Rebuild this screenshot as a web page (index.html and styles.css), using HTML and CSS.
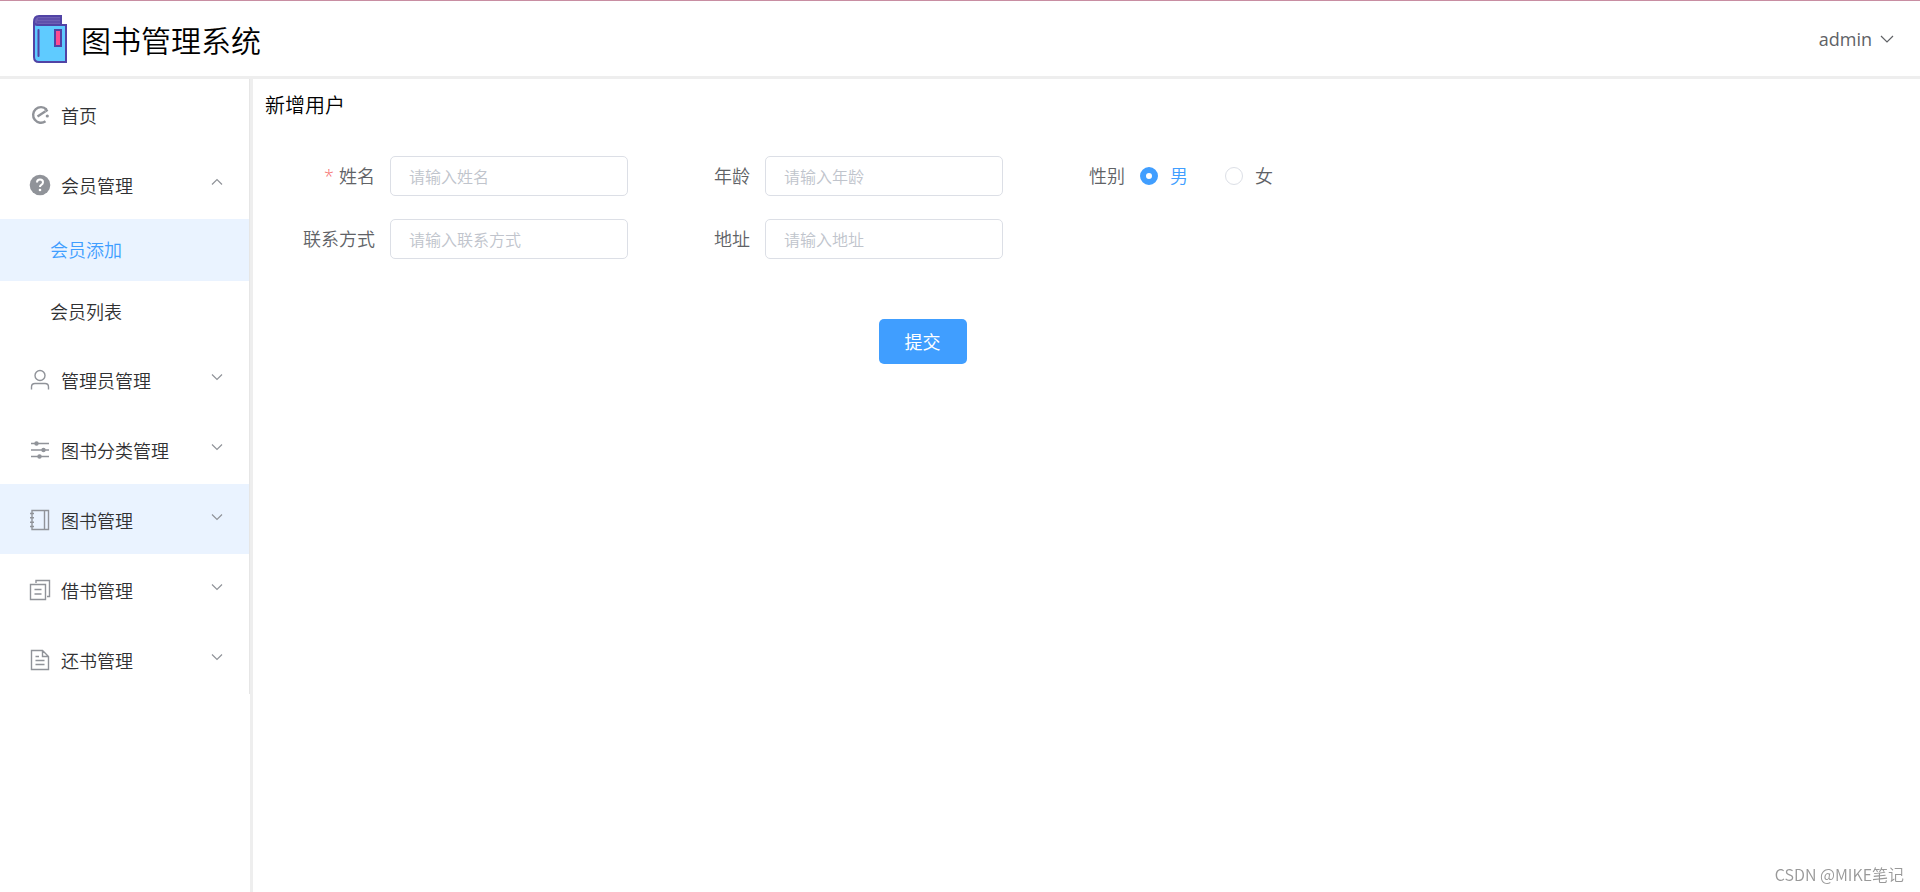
FILE: index.html
```html
<!DOCTYPE html>
<html lang="zh-CN">
<head>
<meta charset="utf-8">
<title>图书管理系统</title>
<link rel="stylesheet" href="styles.css">
</head>
<body>
<header class="header">
  <div class="brand">
    <svg class="logo" viewBox="0 0 34 48" aria-hidden="true">
      <path d="M1 7Q1 1 6 1H28V10H33V47H6Q1 47 1 42Z" fill="#5fcbff"/>
      <path d="M1 8Q1 1 6 1H28V10H1Z" fill="#6e5fb4"/>
      <path d="M5 4H27M4 7H27" stroke="#5142a3" stroke-width="1"/>
      <path d="M1 7Q1 1 6 1H28V10H33V47H6Q1 47 1 42ZM1 8Q2 10 6 10H28" fill="none" stroke="#5143a5" stroke-width="2"/>
      <path d="M5.500 15V41" stroke="#5143a5" stroke-width="2" stroke-linecap="round"/>
      <path d="M22 15H28V31H22Z" fill="#ff4b91" stroke="#5143a5" stroke-width="2"/>
    </svg>
    <h1 class="brand-name">图书管理系统</h1>
  </div>
  <button class="account" type="button">admin
    <svg class="account-arrow" viewBox="0 0 14 8" aria-hidden="true"><path d="M1 1L7 7L13 1"/></svg>
  </button>
</header>
<div class="body">
  <aside class="aside">
    <nav class="menu">
      <a class="item" href="#">
        <svg class="icon" viewBox="0 0 22 22" aria-hidden="true"><path d="M17.500 5.500A7.800 7.800 0 1 0 16.500 17.300" stroke-width="2.400"/><path d="M8.500 12.500L16.500 7.300" stroke-width="2.400"/><path d="M16.300 4.500L18.300 7.500" stroke-width="2.400"/><circle class="solid" cx="18.300" cy="12" r="1.600"/></svg>
        <span>首页</span>
      </a>
      <button class="item" type="button" aria-expanded="true">
        <svg class="icon" viewBox="0 0 22 22" aria-hidden="true"><circle class="solid" cx="11" cy="11" r="10.300"/><path class="mark" d="M8 8.500Q8 5.500 11 5.500Q14 5.500 14 8.200Q14 9.800 12.300 10.800Q11 11.600 11 13"/><circle class="mark-dot" cx="11" cy="16" r="1.300"/></svg>
        <span>会员管理</span>
        <svg class="arrow" viewBox="0 0 12 8" aria-hidden="true"><path d="M1 6.500L6 1.500L11 6.500"/></svg>
      </button>
      <div class="submenu">
        <a class="subitem active" href="#">会员添加</a>
        <a class="subitem" href="#">会员列表</a>
      </div>
      <button class="item" type="button">
        <svg class="icon" viewBox="0 0 22 22" aria-hidden="true"><circle cx="11" cy="6.500" r="5"/><path d="M2.500 20.500V18Q2.500 14.500 6 14.500H16Q19.500 14.500 19.500 18V20.500"/></svg>
        <span>管理员管理</span>
        <svg class="arrow" viewBox="0 0 12 8" aria-hidden="true"><path d="M1 1.500L6 6.500L11 1.500"/></svg>
      </button>
      <button class="item" type="button">
        <svg class="icon" viewBox="0 0 22 22" aria-hidden="true"><path d="M2 4.500H20M2 11H20M2 17.500H20"/><circle class="solid" cx="7.500" cy="4.500" r="2.200"/><circle class="solid" cx="14.500" cy="11" r="2.200"/><circle class="solid" cx="10.500" cy="17.500" r="2.200"/></svg>
        <span>图书分类管理</span>
        <svg class="arrow" viewBox="0 0 12 8" aria-hidden="true"><path d="M1 1.500L6 6.500L11 1.500"/></svg>
      </button>
      <button class="item hovered" type="button">
        <svg class="icon" viewBox="0 0 22 22" aria-hidden="true"><path d="M3 1.500H19.500V20.500H3ZM15.500 1.500V20.500"/><path d="M1 4.500H5M1 8.800H5M1 13.200H5M1 17.500H5"/></svg>
        <span>图书管理</span>
        <svg class="arrow" viewBox="0 0 12 8" aria-hidden="true"><path d="M1 1.500L6 6.500L11 1.500"/></svg>
      </button>
      <button class="item" type="button">
        <svg class="icon" viewBox="0 0 22 22" aria-hidden="true"><path d="M1.500 5.500H16.500V20.500H1.500ZM7 4V1.500H20.500V17.500H18M5.500 10.500H12.500M5.500 15H12.500"/></svg>
        <span>借书管理</span>
        <svg class="arrow" viewBox="0 0 12 8" aria-hidden="true"><path d="M1 1.500L6 6.500L11 1.500"/></svg>
      </button>
      <button class="item" type="button">
        <svg class="icon" viewBox="0 0 22 22" aria-hidden="true"><path d="M2.500 1.500H13.500L19.500 7.500V20.500H2.500ZM13.500 1.500V7.500H19.500M6.500 7.500H10M6.500 11.500H15.500M6.500 15.500H15.500"/></svg>
        <span>还书管理</span>
        <svg class="arrow" viewBox="0 0 12 8" aria-hidden="true"><path d="M1 1.500L6 6.500L11 1.500"/></svg>
      </button>
    </nav>
  </aside>
  <main class="main">
    <h2 class="title">新增用户</h2>
    <form class="form">
      <div class="fields">
        <div class="field">
          <label class="label required" for="name">姓名</label>
          <input class="input" id="name" type="text" placeholder="请输入姓名">
        </div>
        <div class="field">
          <label class="label" for="age">年龄</label>
          <input class="input" id="age" type="text" placeholder="请输入年龄">
        </div>
        <div class="field" role="radiogroup" aria-labelledby="sex">
          <span class="label" id="sex">性别</span>
          <div class="radios">
            <label class="radio"><input class="dot" type="radio" name="sex" checked><span class="radio-text">男</span></label>
            <label class="radio"><input class="dot" type="radio" name="sex"><span class="radio-text">女</span></label>
          </div>
        </div>
        <div class="field">
          <label class="label" for="phone">联系方式</label>
          <input class="input" id="phone" type="text" placeholder="请输入联系方式">
        </div>
        <div class="field">
          <label class="label" for="address">地址</label>
          <input class="input" id="address" type="text" placeholder="请输入地址">
        </div>
      </div>
      <div class="actions"><button class="submit" type="button">提交</button></div>
    </form>
  </main>
</div>
<div class="watermark">CSDN @MIKE笔记</div>
</body>
</html>
```
FILE: styles.css
```css
* { box-sizing: border-box; }

body {
  margin: 0;
  min-height: 100vh;
  display: flex;
  flex-direction: column;
  background: #fff;
  color: #303133;
  font: 350 18px/24px "Noto Sans CJK SC", sans-serif;
}

button {
  border: 0;
  background: none;
  font: inherit;
  color: inherit;
  cursor: pointer;
}

a { color: inherit; text-decoration: none; }

.header {
  display: flex;
  align-items: center;
  justify-content: space-between;
  height: 79px;
  padding: 0 26px 0 33px;
  border-top: 1px solid #c88ea2;
  border-bottom: 3px solid #eee;
}

.brand { display: flex; align-items: center; gap: 14px; }
.logo { width: 34px; height: 48px; }
.brand-name { margin: 0; font-size: 30px; line-height: 40px; font-weight: 350; color: #000; }

.account {
  display: flex;
  align-items: center;
  gap: 8px;
  padding: 0;
  color: #606266;
  font-family: "Open Sans", sans-serif;
  font-weight: 400;
}
.account-arrow { width: 14px; height: 8px; fill: none; stroke: #606266; stroke-width: 1.2; }

.body { flex: 1; display: flex; }
.aside { flex: none; width: 253px; border-right: 3px solid #eee; }
.menu { border-right: 1px solid #e6e6e6; }

.item {
  display: flex;
  align-items: center;
  width: 100%;
  height: 70px;
  padding: 2px 26px 0 29px;
  text-align: left;
}
.hovered { background: #eaf3ff; }

.icon { width: 22px; height: 22px; margin-right: 10px; fill: none; stroke: #909399; stroke-width: 1.4; }
.icon .solid { fill: #909399; stroke: none; }
.icon .mark { stroke: #fff; stroke-width: 2; }
.icon .mark-dot { fill: #fff; stroke: none; }
.arrow { width: 12px; height: 8px; margin: 0 0 6px auto; fill: none; stroke: #909399; stroke-width: 1.2; }

.submenu { display: grid; padding-bottom: 1px; }
.subitem { padding: 18px 0 20px 50px; }
.active { background: #eaf3ff; color: #409eff; }

.main { flex: 1; padding: 12px; }
.title { margin: 0; font-size: 20px; line-height: 28px; font-weight: 350; color: #000; }

.form { max-width: 1315px; margin-top: 37px; }
.fields { display: grid; grid-template-columns: repeat(auto-fill, 375px); row-gap: 23px; }
.field { display: flex; align-items: center; height: 40px; color: #606266; }
.label { width: 125px; padding: 0 15px 2px 0; text-align: right; }
.required::before { content: "*"; margin-right: 5px; color: #f56c6c; font-family: "Open Sans", sans-serif; }

.input {
  width: 238px;
  height: 40px;
  padding: 0 18px;
  border: 1px solid #dcdfe6;
  border-radius: 5px;
  background: #fff;
  color: #606266;
  font: inherit;
  font-size: 16px;
}
.input::placeholder { color: #c0c4cc; opacity: 1; }

.radios { display: flex; gap: 37px; }
.radio { display: flex; align-items: center; gap: 12px; }
.radio-text { padding-bottom: 2px; }
.dot {
  appearance: none;
  width: 18px;
  height: 18px;
  margin: 0;
  border: 1px solid #dcdfe6;
  border-radius: 50%;
  background: #fff;
}
.dot:checked { border: 6px solid #409eff; }
.dot:checked + .radio-text { color: #409eff; }

.actions { display: flex; justify-content: center; margin-top: 60px; }
.submit {
  height: 45px;
  padding: 0 26px 2px;
  border-radius: 5px;
  background: #409eff;
  color: #fff;
  font-weight: 400;
}

.watermark {
  position: fixed;
  right: 16px;
  bottom: 6px;
  color: #999;
  font-size: 16px;
}
```
